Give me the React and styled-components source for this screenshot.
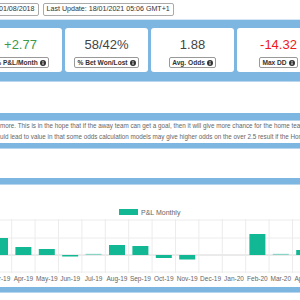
import React from "react";
import styled, { createGlobalStyle } from "styled-components";

const GlobalStyle = createGlobalStyle`
  html, body { margin: 0; padding: 0; background: #fff; overflow: hidden; }
  body { font-family: "Liberation Sans", Arial, sans-serif; }
`;

const stats = [
  { value: "+2.77", label: "% P&L/Month", color: "#3b9a4c" },
  { value: "58/42%", label: "% Bet Won/Lost", color: "#444" },
  { value: "1.88", label: "Avg. Odds", color: "#444" },
  { value: "-14.32", label: "Max DD", color: "#f01818" },
];

const months = [
  ["Mar-19", 17], ["Apr-19", 8], ["May-19", 6], ["Jun-19", -1.5], ["Jul-19", 1.2, true],
  ["Aug-19", 10], ["Sep-19", 9], ["Oct-19", -3], ["Nov-19", -4.5], ["Dec-19", 0],
  ["Jan-20", 0], ["Feb-20", 21], ["Mar-20", 1.2, true], ["Apr-20", 5],
];

function InfoIcon() {
  return (
    <svg width="6" height="6" viewBox="0 0 10 10">
      <circle cx="5" cy="5" r="5" fill="#333" />
      <rect x="4.2" y="4.2" width="1.6" height="3.8" fill="#fff" />
      <circle cx="5" cy="2.7" r="0.9" fill="#fff" />
    </svg>
  );
}

function Chart() {
  const step = 23.4;
  const zero = 70;
  return (
    <svg width="300" height="103">
      <rect x="119" y="24" width="19" height="6" fill="#12b894" />
      <text x="141" y="30" fontSize="7" fill="#666" fontFamily="Liberation Sans, Arial, sans-serif">P&amp;L Monthly</text>
      {[35, 53, 87].map((y) => (
        <line key={y} x1="0" x2="300" y1={y} y2={y} stroke="#ececec" strokeWidth="1" />
      ))}
      <line x1="0" x2="300" y1={zero} y2={zero} stroke="#d6d6d6" strokeWidth="1" />
      {months.map((m, i) => (
        <line key={"g" + i} x1={11.7 + i * step} x2={11.7 + i * step} y1="34" y2="88" stroke="#ececec" />
      ))}
      {months.map(([name, v, light], i) => {
        const cx = i * step;
        const h = Math.abs(v);
        return (
          <g key={name}>
            {h > 0 && (
              <rect
                x={cx - 8}
                y={v > 0 ? zero - h : zero}
                width="16"
                height={h}
                fill="#12b894"
                opacity={light ? 0.45 : 1}
              />
            )}
            <text x={cx} y="96" fontSize="6.5" fill="#666" textAnchor="middle" fontFamily="Liberation Sans, Arial, sans-serif">
              {name}
            </text>
          </g>
        );
      })}
    </svg>
  );
}

export default function App() {
  return (
    <>
      <GlobalStyle />
      <TopBar>
        <Badge style={{ marginLeft: -5 }}>01/08/2018</Badge>
        <Badge>Last Update: 18/01/2021 05:06 GMT+1</Badge>
      </TopBar>
      <Board>
        <CardRow>
          {stats.map((s) => (
            <Card key={s.label}>
              <Value $color={s.color}>{s.value}</Value>
              <Label>
                {s.label} <InfoIcon />
              </Label>
            </Card>
          ))}
        </CardRow>
        <Panel $h={32} $mt={9} />
        <Panel $h={23} $mt={7}>
          <TextBlock>
            <Line>more. This is in the hope that if the away team can get a goal, then it will give more chance for the home team</Line>
            <Line>uld lead to value in that some odds calculation models may give higher odds on the over 2.5 result if the Home</Line>
          </TextBlock>
        </Panel>
        <Panel $h={30} $mt={5} />
        <Panel $h={103} $mt={6}>
          <Chart />
        </Panel>
        <Panel $h={20} $mt={5} />
      </Board>
    </>
  );
}

const TopBar = styled.div`
  height: 20px;
  display: flex;
  align-items: center;
  gap: 4px;
  background: #fff;
  border-bottom: 1px solid #d5e6f5;
  box-sizing: border-box;
`;

const Badge = styled.div`
  font-size: 7.1px;
  color: #333;
  border: 1px solid #aaa;
  border-radius: 2px;
  padding: 2px 3px;
  white-space: nowrap;
  line-height: 7px;
`;

const Board = styled.div`
  background: #7eb6e2;
  padding-top: 8px;
  height: 300px;
`;

const CardRow = styled.div`
  display: flex;
  gap: 3px;
  margin-left: -21px;
`;

const Card = styled.div`
  flex: 0 0 83px;
  height: 44px;
  background: #fff;
  border-radius: 3px;
  display: flex;
  flex-direction: column;
  align-items: center;
  padding-top: 9px;
  box-sizing: border-box;
`;

const Value = styled.div`
  font-size: 13px;
  line-height: 15px;
  color: ${(p) => p.$color};
`;

const Label = styled.div`
  margin-top: 5px;
  display: flex;
  align-items: center;
  gap: 2px;
  font-size: 6.6px;
  font-weight: bold;
  color: #333;
  border: 1px solid #999;
  border-radius: 2px;
  padding: 1px 2px;
  white-space: nowrap;
`;

const Panel = styled.div`
  margin-top: ${(p) => p.$mt}px;
  height: ${(p) => p.$h}px;
  background: #fff;
  border-top: 1px solid #b8d5ee;
  box-sizing: border-box;
  overflow: hidden;
`;

const TextBlock = styled.div`
  padding-top: 0;
`;

const Line = styled.div`
  font-size: 6.3px;
  line-height: 10.5px;
  color: #666;
  white-space: nowrap;
`;
